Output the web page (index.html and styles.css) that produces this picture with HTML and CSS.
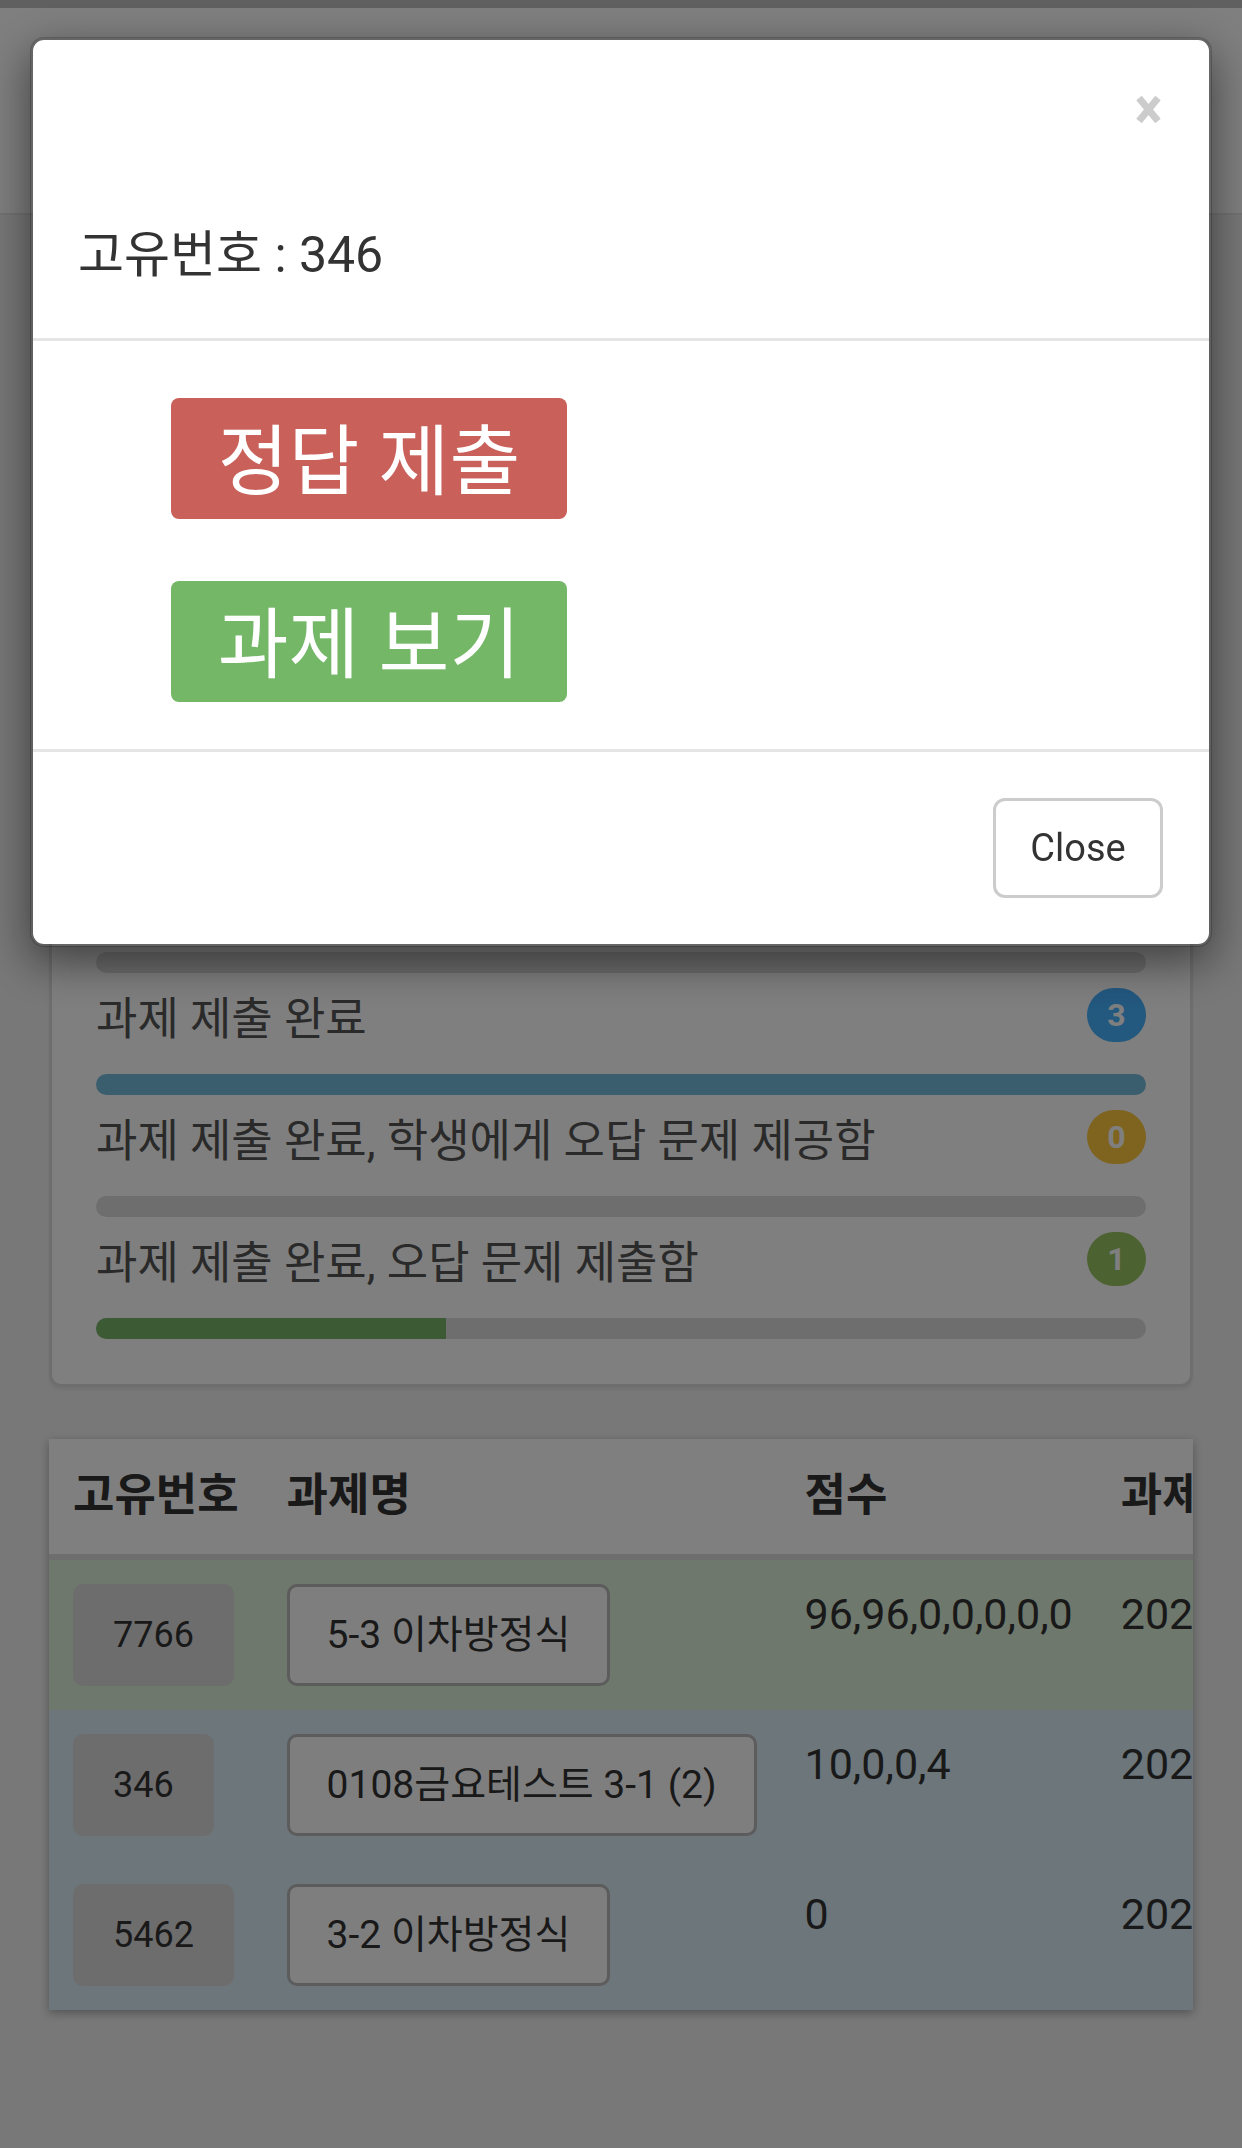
FILE: index.html
```html
<!DOCTYPE html>
<html lang="ko">
<head>
  <meta charset="UTF-8">
  <title>과제 관리</title>
  <link rel="stylesheet" href="styles.css">
</head>
<body>

<header class="navbar">
  <span class="brand">과제 관리</span>
</header>

<main class="page">
  <h3 class="page-title">0108금요테스트 3-1 (2)</h3>

  <section class="panel">
    <h4 class="panel-title">제출 현황</h4>

    <div class="item">
      <div class="item-head"><span class="item-label">과제 미확인</span><span class="badge badge-gray">0</span></div>
      <div class="bar"><div class="fill fill-blue" style="width:0%"></div></div>
    </div>
    <div class="item">
      <div class="item-head"><span class="item-label">과제 확인</span><span class="badge badge-gray">0</span></div>
      <div class="bar"><div class="fill fill-blue" style="width:0%"></div></div>
    </div>
    <div class="item">
      <div class="item-head"><span class="item-label">과제 진행 중</span><span class="badge badge-gray">0</span></div>
      <div class="bar"><div class="fill fill-blue" style="width:0%"></div></div>
    </div>
    <div class="item">
      <div class="item-head"><span class="item-label">과제 미제출</span><span class="badge badge-red">0</span></div>
      <div class="bar"><div class="fill fill-blue" style="width:0%"></div></div>
    </div>
    <div class="item">
      <div class="item-head"><span class="item-label">과제 제출 완료</span><span class="badge badge-blue">3</span></div>
      <div class="bar"><div class="fill fill-blue" style="width:100%"></div></div>
    </div>
    <div class="item">
      <div class="item-head"><span class="item-label">과제 제출 완료, 학생에게 오답 문제 제공함</span><span class="badge badge-yellow">0</span></div>
      <div class="bar"><div class="fill fill-yellow" style="width:0%"></div></div>
    </div>
    <div class="item">
      <div class="item-head"><span class="item-label">과제 제출 완료, 오답 문제 제출함</span><span class="badge badge-green">1</span></div>
      <div class="bar"><div class="fill fill-green" style="width:33.3%"></div></div>
    </div>
  </section>

  <div class="table-wrap">
    <table class="task-table">
      <thead>
        <tr>
          <th>고유번호</th>
          <th>과제명</th>
          <th>점수</th>
          <th>과제 기한</th>
        </tr>
      </thead>
      <tbody>
        <tr class="row-success">
          <td><span class="id-tag">7766</span></td>
          <td><button class="title-btn">5-3 이차방정식</button></td>
          <td class="score">96,96,0,0,0,0,0</td>
          <td class="score">2023-01-13 23:59</td>
        </tr>
        <tr class="row-info">
          <td><span class="id-tag">346</span></td>
          <td><button class="title-btn">0108금요테스트 3-1 (2)</button></td>
          <td class="score">10,0,0,4</td>
          <td class="score">2023-01-08 23:59</td>
        </tr>
        <tr class="row-info">
          <td><span class="id-tag">5462</span></td>
          <td><button class="title-btn">3-2 이차방정식</button></td>
          <td class="score">0</td>
          <td class="score">2023-01-06 23:59</td>
        </tr>
      </tbody>
    </table>
  </div>
</main>

<!-- modal -->
<div class="backdrop"></div>
<div class="modal">
  <div class="modal-content">
    <div class="modal-header">
      <button class="close" aria-label="닫기">
        <svg width="25" height="29" viewBox="0 0 25 29">
          <path d="M3 3 L22 26 M22 3 L3 26" stroke="#cccccc" stroke-width="7" fill="none"/>
        </svg>
      </button>
      <h4 class="modal-title">고유번호 : 346</h4>
    </div>
    <div class="modal-body">
      <button class="btn-big btn-red">정답 제출</button>
      <button class="btn-big btn-green">과제 보기</button>
    </div>
    <div class="modal-footer">
      <button class="btn-close">Close</button>
    </div>
  </div>
</div>

</body>
</html>
```

FILE: styles.css
```css
* {
  box-sizing: border-box;
}

body {
  margin: 0;
  min-height: 2148px;
  background-color: #f0f0f0;
  font-family: Roboto, "Noto Sans CJK KR", sans-serif;
  color: #333;
}

.navbar {
  height: 215px;
  background: #fff;
  border-top: 8px solid #c0c0c0;
  border-bottom: 2px solid #e6e6e6;
  padding: 60px 48px;
}

.brand {
  font-size: 54px;
  line-height: 80px;
}

.page {
  padding: 40px 49px 0;
}

.page-title {
  margin: 0 0 30px;
  font-size: 54px;
  line-height: 70px;
  font-weight: normal;
}

/* status panel */
.panel {
  background: #fff;
  border: 3px solid #dddddd;
  border-radius: 12px;
  padding: 45px 44px 31px;
  box-shadow: 0 3px 3px rgba(0, 0, 0, 0.05);
}

.panel-title {
  margin: 0 0 30px;
  font-size: 48px;
  line-height: 66px;
}

.item-head {
  display: flex;
  justify-content: space-between;
  align-items: center;
  height: 55px;
  margin-bottom: 32px;
}

.item-label {
  font-size: 45px;
  line-height: 55px;
  color: #555;
  margin-top: 10px;
}

.badge {
  min-width: 59px;
  height: 54px;
  padding: 0 18px;
  border-radius: 27px;
  font-size: 32px;
  font-weight: bold;
  line-height: 54px;
  text-align: center;
  color: #fff;
}

.badge-gray { background: #999; }
.badge-red { background: #e06060; }
.badge-blue { background: #46b0fe; }
.badge-yellow { background: #ffc840; }
.badge-green { background: #98c460; }

.bar {
  height: 21px;
  margin-bottom: 14px;
  background: #dcdcdc;
  border-radius: 11px;
  overflow: hidden;
}

.fill {
  height: 100%;
}

.fill-blue { background: #74bcdc; }
.fill-yellow { background: #f0ad4e; }
.fill-green { background: #78b468; }

/* table */
.table-wrap {
  margin-top: 52px;
  overflow: hidden;
  background: #fff;
  box-shadow: 0 3px 9px rgba(0, 0, 0, 0.3);
}

.task-table {
  border-collapse: collapse;
  white-space: nowrap;
}

.task-table th {
  padding: 27px 24px 28px;
  font-size: 45px;
  line-height: 60px;
  text-align: left;
  border-bottom: 6px solid #dddddd;
}

.task-table td {
  padding: 24px;
  vertical-align: top;
}

.row-success { background: #dff0d8; }
.row-info { background: #d9edf7; }

.id-tag {
  display: inline-block;
  vertical-align: top;
  padding: 21px 40px;
  font-size: 36px;
  line-height: 60px;
  background: #dadadd;
  border-radius: 10px;
}

.title-btn {
  display: inline-block;
  vertical-align: top;
  padding: 18px 37px;
  font-family: inherit;
  font-size: 39px;
  line-height: 60px;
  color: #333;
  background: #fcfcfc;
  border: 3px solid #b8b8b8;
  border-radius: 10px;
}

.score {
  font-size: 43px;
  line-height: 60px;
}

/* modal */
.backdrop {
  position: fixed;
  inset: 0;
  background: rgba(0, 0, 0, 0.5);
}

.modal {
  position: fixed;
  top: 37px;
  left: 30px;
  right: 30px;
}

.modal-content {
  background: #fff;
  background-clip: padding-box;
  border: 3px solid rgba(0, 0, 0, 0.2);
  border-radius: 14px;
  box-shadow: 0 15px 45px rgba(0, 0, 0, 0.5);
}

.modal-header {
  display: flex;
  flex-direction: column;
  padding: 55px 48px 53px 45px;
  border-bottom: 3px solid #e5e5e5;
}

.close {
  align-self: flex-end;
  display: block;
  height: 29px;
  padding: 0;
  border: 0;
  background: none;
}

.close svg {
  display: block;
}

.modal-title {
  margin: 101px 0 0;
  font-size: 50px;
  line-height: 60px;
  font-weight: normal;
  color: #333;
}

.modal-body {
  display: flex;
  flex-direction: column;
  align-items: flex-start;
  gap: 62px;
  padding: 57px 0 47px 138px;
}

.btn-big {
  width: 396px;
  height: 121px;
  padding: 0 0 6px;
  border: 0;
  border-radius: 8px;
  font-family: inherit;
  font-size: 77px;
  color: #fff;
}

.btn-red { background: #c9605a; }
.btn-green { background: #73b767; }

.modal-footer {
  display: flex;
  justify-content: flex-end;
  padding: 46px;
  border-top: 3px solid #e5e5e5;
}

.btn-close {
  width: 170px;
  height: 100px;
  font-family: inherit;
  font-size: 38px;
  color: #333;
  background: #fff;
  border: 3px solid #cccccc;
  border-radius: 12px;
}
```
